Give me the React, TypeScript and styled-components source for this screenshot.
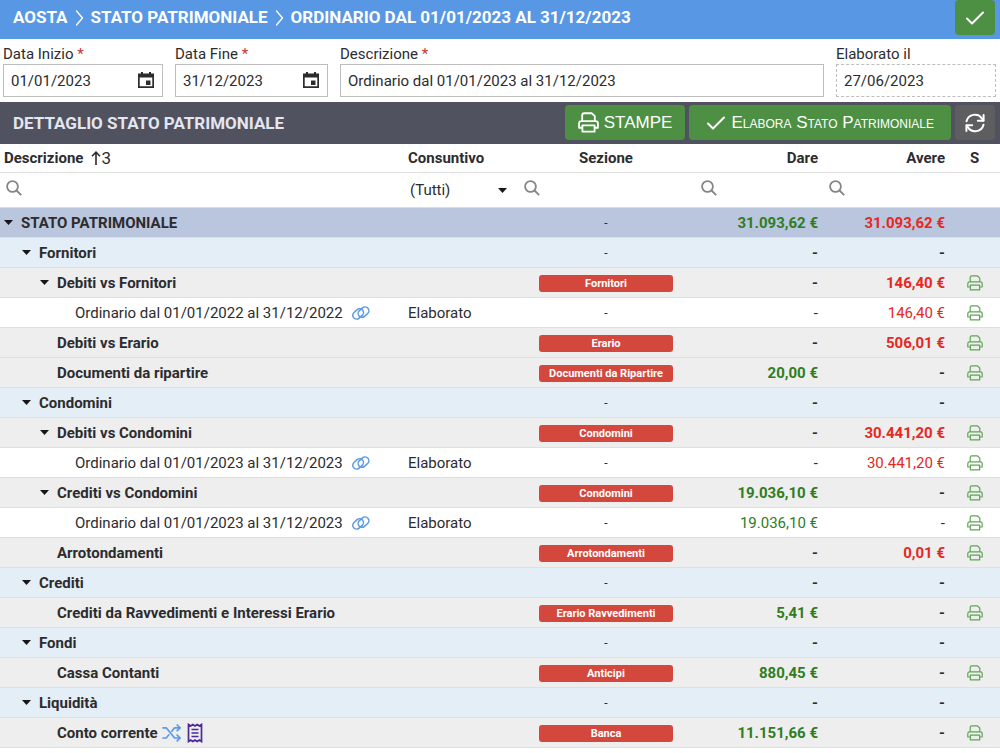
import React from "react";
import styled, { createGlobalStyle, css } from "styled-components";

const GlobalStyle = createGlobalStyle`
  *, *::before, *::after { box-sizing: border-box; }
  body { margin: 0; background: #fff; }
  body, input, select, button, table {
    font-family: Roboto, "Open Sans", sans-serif;
    font-size: 15px;
    color: #2c2c2e;
  }
`;

/* ---------- icons ---------- */

const CheckIcon = () => (
  <svg width="20" height="20" viewBox="0 0 20 20" fill="none" stroke="currentColor" strokeWidth="2" strokeLinecap="round" strokeLinejoin="round" aria-hidden="true">
    <path d="M2 10.500 7 15.500 18 4.500" />
  </svg>
);

const ChevronIcon = () => (
  <svg width="9" height="18" viewBox="0 0 9 18" fill="none" stroke="currentColor" strokeWidth="1.3" strokeLinecap="round" strokeLinejoin="round" aria-hidden="true">
    <path d="M1.500 2 7.500 9l-6 7" />
  </svg>
);

const PrintIcon = ({ size, weight }: { size: number; weight: number }) => (
  <svg width={size} height={size} viewBox="0 0 20 20" fill="none" stroke="currentColor" strokeWidth={weight} strokeLinecap="round" strokeLinejoin="round" aria-hidden="true">
    <path d="M4 8V3.200Q4 1.200 6 1.200h7.200L16 4v4" />
    <path d="M4 15H1V11Q1 8.700 3.200 8.700h13.600Q19 8.700 19 11v4h-3" />
    <path d="M4.200 12.700h11.600v6H4.200z" />
  </svg>
);

const RefreshIcon = () => (
  <svg width="20" height="20" viewBox="0 0 20 20" fill="none" stroke="currentColor" strokeWidth="2" strokeLinecap="round" strokeLinejoin="round" aria-hidden="true">
    <path d="M1.500 8.200A8.600 8.600 0 0 1 17 5.600l1.200 1.800" />
    <path d="M18.600 2v5.800h-5.800" />
    <path d="M18.500 11.800A8.600 8.600 0 0 1 3 14.400l-1.200-1.800" />
    <path d="M1.400 18v-5.800h5.800" />
  </svg>
);

const CalendarIcon = () => (
  <svg width="18" height="18" viewBox="0 0 18 18" fill="#2c2c2e" aria-hidden="true">
    <path fillRule="evenodd" d="M4 1h2v1.500h6V1h2v1.500h3V17H1V2.500h3zM2.700 6.500v8.800h12.600V6.500z" />
    <path d="M9 9.500h4.500V14H9z" />
  </svg>
);

const SearchIcon = () => (
  <svg width="16" height="16" viewBox="0 0 16 16" fill="none" stroke="#858585" strokeWidth="1.8" aria-hidden="true">
    <circle cx="6.500" cy="6.500" r="5.400" />
    <path d="M10.500 10.500 15.200 15.200" />
  </svg>
);

const CaretIcon = () => (
  <svg width="9" height="5" viewBox="0 0 9 5" fill="#161618" aria-hidden="true">
    <path d="M0 0h9L4.500 5z" />
  </svg>
);

const SortIcon = () => (
  <svg width="10" height="14" viewBox="0 0 10 14" fill="none" stroke="#2c2c2e" strokeWidth="1.6" aria-hidden="true">
    <path d="M5 14V1.500M1 5.200 5 1.200 9 5.200" />
  </svg>
);

const LinkIcon = () => (
  <svg width="20" height="16" viewBox="0 0 20 16" fill="none" stroke="#5b9ae6" strokeWidth="1.5" aria-hidden="true">
    <rect x="1.200" y="5.100" width="11.800" height="7.600" rx="3.800" transform="rotate(-42 7.100 8.900)" />
    <rect x="6.600" y="3.300" width="11.800" height="7.600" rx="3.800" transform="rotate(-42 12.500 7.100)" />
  </svg>
);

const ShuffleIcon = () => (
  <svg width="19" height="18" viewBox="0 0 19 18" fill="none" stroke="#5b9ae6" strokeWidth="1.7" strokeLinecap="round" strokeLinejoin="round" aria-hidden="true">
    <path d="M1 3.800h3.200L12.600 14H18" />
    <path d="M1 14h3.200l2.700-3.200M9.800 7.200l2.800-3.400H18" />
    <path d="M15.200 1 18 3.800l-2.800 2.800M15.200 11.200 18 14l-2.800 2.800" />
  </svg>
);

const ReceiptIcon = () => (
  <svg width="16" height="20" viewBox="0 0 16 20" fill="none" stroke="#4b2a9b" strokeWidth="1.700" aria-hidden="true">
    <path d="M1.500 1.500 3.600 3 5.800 1.500 8 3l2.200-1.500L12.400 3l2.100-1.500v17L12.400 17l-2.200 1.500L8 17l-2.200 1.500L3.600 17l-2.100 1.500z" />
    <path d="M4.500 6.500h7M4.500 10h7M4.500 13.500h7" />
  </svg>
);

/* ---------- page header ---------- */

const Header = styled.header`
  display: flex;
  align-items: flex-start;
  justify-content: space-between;
  height: 39px;
  padding: 0 5px 0 13px;
  background: #5797e4;
`;

const Breadcrumb = styled.h1`
  display: flex;
  align-items: center;
  gap: 7px;
  margin: 0;
  font-size: 17px;
  font-weight: 700;
  line-height: 35px;
  color: #fff;
`;

const Button = styled.button<{ $tone?: "green" | "grey"; $shape?: "square" | "wide" }>`
  display: inline-flex;
  align-items: center;
  justify-content: center;
  gap: 5px;
  height: 35px;
  width: ${(p) => (p.$shape === "square" ? "40px" : "auto")};
  padding: 0 ${(p) => (p.$shape === "square" ? "0" : p.$shape === "wide" ? "17px" : "13px")};
  border: 0;
  border-radius: 4px;
  background: ${(p) => (p.$tone === "grey" ? "#5e5e60" : "#4d9043")};
  color: #fff;
  font-family: "Liberation Sans", Arial, sans-serif;
  font-size: 17px;
`;

const SmallCaps = styled.span`
  font-variant: small-caps;
`;

/* ---------- form ---------- */

const Form = styled.form`
  display: grid;
  grid-template-columns: 160px 153px 1fr 160px;
  gap: 12px;
  height: 63px;
  padding: 6px 4px 0 3px;
`;

const Field = styled.div`
  display: flex;
  flex-direction: column;
`;

const Label = styled.label`
  line-height: 19px;
`;

const Required = styled.span`
  color: #c8372f;
`;

const InputBox = styled.div<{ $readOnly?: boolean }>`
  display: flex;
  align-items: center;
  height: 33px;
  padding: 0 7px;
  border: 1px ${(p) => (p.$readOnly ? "dashed" : "solid")} #bdbdbd;
`;

const TextInput = styled.input`
  flex: 1;
  min-width: 0;
  padding: 0;
  border: 0;
  outline: 0;
  background: transparent;
`;

const IconButton = styled.button`
  display: inline-flex;
  align-items: center;
  padding: 0 0 2px;
  border: 0;
  background: none;
  color: #5fa556;
  vertical-align: middle;
`;

/* ---------- detail bar ---------- */

const Toolbar = styled.div`
  display: flex;
  align-items: center;
  gap: 4px;
  height: 42px;
  padding: 0 5px 1px 13px;
  background: #50525f;
`;

const ToolbarTitle = styled.h2`
  flex: 1;
  margin: 0;
  font-size: 17px;
  font-weight: 700;
  color: #e4e6ef;
`;

/* ---------- grid ---------- */

const Grid = styled.table`
  width: 100%;
  table-layout: fixed;
  border-collapse: separate;
  border-spacing: 0;
`;

const Column = styled.col<{ $width?: number }>`
  width: ${(p) => (p.$width ? `${p.$width}px` : "auto")};
`;

type Align = "left" | "center" | "right";

const HeadCell = styled.th<{ $align?: Align }>`
  height: 29px;
  padding: 0 5px 0 4px;
  border-bottom: 1px solid #e0e0e0;
  font-weight: 700;
  line-height: 20px;
  text-align: ${(p) => p.$align ?? "left"};
`;

const HeadLabel = styled.span`
  display: flex;
  align-items: center;
  gap: 8px;
`;

const SortOrder = styled.span`
  display: flex;
  align-items: center;
  font-size: 17px;
  font-weight: 400;
`;

const FilterCell = styled.td`
  height: 35px;
  padding: 0 5px 0 6px;
  border-bottom: 1px solid #dcdcdc;
`;

const FilterBox = styled.label`
  display: flex;
  align-items: center;
  gap: 5px;
  height: 30px;
  padding-bottom: 4px;
`;

const SelectBox = styled(FilterBox)`
  padding: 0 6px 0 0;
`;

const FilterSelect = styled.select`
  flex: 1;
  min-width: 0;
  padding: 0;
  border: 0;
  appearance: none;
  background: transparent;
`;

type Kind = "root" | "group" | "account" | "detail";

const rowColors: Record<Kind, string> = {
  root: "#bac5de",
  group: "#e4eef6",
  account: "#eeeeee",
  detail: "#ffffff",
};

const Row = styled.tr<{ $kind: Kind }>`
  height: 30px;
  background: ${(p) => rowColors[p.$kind]};
  ${(p) =>
    p.$kind !== "detail" &&
    css`
      font-weight: 700;
    `}
`;

const Cell = styled.td<{ $align?: Align; $color?: string }>`
  padding: 0 5px 0 4px;
  border-bottom: 1px solid #dce0e4;
  line-height: 20px;
  text-align: ${(p) => p.$align ?? "left"};
  color: ${(p) => p.$color ?? "inherit"};
  white-space: nowrap;
`;

const Tree = styled.div<{ $level: number }>`
  display: flex;
  align-items: center;
  padding-left: ${(p) => p.$level * 18}px;
`;

const Toggle = styled.button`
  display: inline-flex;
  width: 17px;
  padding: 0;
  border: 0;
  background: none;
`;

const ToggleSpace = styled.span`
  width: 17px;
`;

const IconLink = styled.a<{ $gap: number }>`
  display: inline-flex;
  margin-left: ${(p) => p.$gap}px;
`;

const Dash = styled.span`
  font-size: 12px;
  font-weight: 400;
`;

const Badge = styled.span`
  display: block;
  width: 134px;
  margin: 2px auto 0;
  border-radius: 3px;
  background: #d3473d;
  color: #fff;
  font-size: 11px;
  font-weight: 700;
  line-height: 17px;
`;

interface Entry {
  kind: Kind;
  level: number;
  name: string;
  open?: boolean;
  status?: string;
  section?: string;
  debit?: string;
  credit?: string;
  extras?: boolean;
}

const entries: Entry[] = [
  { kind: "root", level: 0, name: "STATO PATRIMONIALE", open: true, debit: "31.093,62 €", credit: "31.093,62 €" },
  { kind: "group", level: 1, name: "Fornitori", open: true },
  { kind: "account", level: 2, name: "Debiti vs Fornitori", open: true, section: "Fornitori", credit: "146,40 €" },
  { kind: "detail", level: 3, name: "Ordinario dal 01/01/2022 al 31/12/2022", status: "Elaborato", credit: "146,40 €" },
  { kind: "account", level: 2, name: "Debiti vs Erario", section: "Erario", credit: "506,01 €" },
  { kind: "account", level: 2, name: "Documenti da ripartire", section: "Documenti da Ripartire", debit: "20,00 €" },
  { kind: "group", level: 1, name: "Condomini", open: true },
  { kind: "account", level: 2, name: "Debiti vs Condomini", open: true, section: "Condomini", credit: "30.441,20 €" },
  { kind: "detail", level: 3, name: "Ordinario dal 01/01/2023 al 31/12/2023", status: "Elaborato", credit: "30.441,20 €" },
  { kind: "account", level: 2, name: "Crediti vs Condomini", open: true, section: "Condomini", debit: "19.036,10 €" },
  { kind: "detail", level: 3, name: "Ordinario dal 01/01/2023 al 31/12/2023", status: "Elaborato", debit: "19.036,10 €" },
  { kind: "account", level: 2, name: "Arrotondamenti", section: "Arrotondamenti", credit: "0,01 €" },
  { kind: "group", level: 1, name: "Crediti", open: true },
  { kind: "account", level: 2, name: "Crediti da Ravvedimenti e Interessi Erario", section: "Erario Ravvedimenti", debit: "5,41 €" },
  { kind: "group", level: 1, name: "Fondi", open: true },
  { kind: "account", level: 2, name: "Cassa Contanti", section: "Anticipi", debit: "880,45 €" },
  { kind: "group", level: 1, name: "Liquidità", open: true },
  { kind: "account", level: 2, name: "Conto corrente", section: "Banca", debit: "11.151,66 €", extras: true },
];

const EntryRow = ({ entry }: { entry: Entry }) => {
  const { kind, level, name, open, status, section, debit, credit, extras } = entry;
  return (
    <Row $kind={kind}>
      <Cell>
        <Tree $level={level}>
          {open ? (
            <Toggle type="button" aria-label={`Comprimi ${name}`}>
              <CaretIcon />
            </Toggle>
          ) : (
            <ToggleSpace />
          )}
          {name}
          {kind === "detail" && (
            <IconLink href="#" $gap={8} aria-label="Apri consuntivo">
              <LinkIcon />
            </IconLink>
          )}
          {extras && (
            <>
              <IconLink href="#" $gap={4} aria-label="Movimenti">
                <ShuffleIcon />
              </IconLink>
              <IconLink href="#" $gap={6} aria-label="Estratto conto">
                <ReceiptIcon />
              </IconLink>
            </>
          )}
        </Tree>
      </Cell>
      <Cell>{status}</Cell>
      <Cell $align="center">{section ? <Badge>{section}</Badge> : <Dash>-</Dash>}</Cell>
      <Cell $align="right" $color={debit && "#2e7d1e"}>{debit ?? "-"}</Cell>
      <Cell $align="right" $color={credit && "#e6281e"}>{credit ?? "-"}</Cell>
      <Cell $align="center">
        {(kind === "account" || kind === "detail") && (
          <IconButton type="button" aria-label={`Stampa ${name}`}>
            <PrintIcon size={16} weight={1.5} />
          </IconButton>
        )}
      </Cell>
    </Row>
  );
};

const SearchFilter = ({ label }: { label: string }) => (
  <FilterCell>
    <FilterBox>
      <SearchIcon />
      <TextInput type="text" aria-label={label} />
    </FilterBox>
  </FilterCell>
);

export default function App() {
  return (
    <>
      <GlobalStyle />
      <Header>
        <Breadcrumb>
          <span>AOSTA</span>
          <ChevronIcon />
          <span>STATO PATRIMONIALE</span>
          <ChevronIcon />
          <span>ORDINARIO DAL 01/01/2023 AL 31/12/2023</span>
        </Breadcrumb>
        <Button type="button" $shape="square" aria-label="Conferma">
          <CheckIcon />
        </Button>
      </Header>

      <Form>
        <Field>
          <Label htmlFor="start">Data Inizio <Required>*</Required></Label>
          <InputBox>
            <TextInput id="start" type="text" defaultValue="01/01/2023" />
            <IconButton type="button" aria-label="Scegli data inizio"><CalendarIcon /></IconButton>
          </InputBox>
        </Field>
        <Field>
          <Label htmlFor="end">Data Fine <Required>*</Required></Label>
          <InputBox>
            <TextInput id="end" type="text" defaultValue="31/12/2023" />
            <IconButton type="button" aria-label="Scegli data fine"><CalendarIcon /></IconButton>
          </InputBox>
        </Field>
        <Field>
          <Label htmlFor="description">Descrizione <Required>*</Required></Label>
          <InputBox>
            <TextInput id="description" type="text" defaultValue="Ordinario dal 01/01/2023 al 31/12/2023" />
          </InputBox>
        </Field>
        <Field>
          <Label htmlFor="processed">Elaborato il</Label>
          <InputBox $readOnly>
            <TextInput id="processed" type="text" readOnly value="27/06/2023" />
          </InputBox>
        </Field>
      </Form>

      <Toolbar>
        <ToolbarTitle>DETTAGLIO STATO PATRIMONIALE</ToolbarTitle>
        <Button type="button"><PrintIcon size={21} weight={1.7} />STAMPE</Button>
        <Button type="button" $shape="wide"><CheckIcon /><SmallCaps>Elabora Stato Patrimoniale</SmallCaps></Button>
        <Button type="button" $tone="grey" $shape="square" aria-label="Aggiorna"><RefreshIcon /></Button>
      </Toolbar>

      <Grid>
        <colgroup>
          <Column />
          <Column $width={114} />
          <Column $width={177} />
          <Column $width={128} />
          <Column $width={127} />
          <Column $width={50} />
        </colgroup>
        <thead>
          <tr>
            <HeadCell>
              <HeadLabel>Descrizione <SortOrder><SortIcon />3</SortOrder></HeadLabel>
            </HeadCell>
            <HeadCell>Consuntivo</HeadCell>
            <HeadCell $align="center">Sezione</HeadCell>
            <HeadCell $align="right">Dare</HeadCell>
            <HeadCell $align="right">Avere</HeadCell>
            <HeadCell $align="center">S</HeadCell>
          </tr>
          <tr>
            <SearchFilter label="Filtra descrizione" />
            <FilterCell>
              <SelectBox>
                <FilterSelect aria-label="Filtra consuntivo">
                  <option>(Tutti)</option>
                </FilterSelect>
                <CaretIcon />
              </SelectBox>
            </FilterCell>
            <SearchFilter label="Filtra sezione" />
            <SearchFilter label="Filtra dare" />
            <SearchFilter label="Filtra avere" />
            <FilterCell />
          </tr>
        </thead>
        <tbody>
          {entries.map((entry, index) => (
            <EntryRow key={index} entry={entry} />
          ))}
        </tbody>
      </Grid>
    </>
  );
}
